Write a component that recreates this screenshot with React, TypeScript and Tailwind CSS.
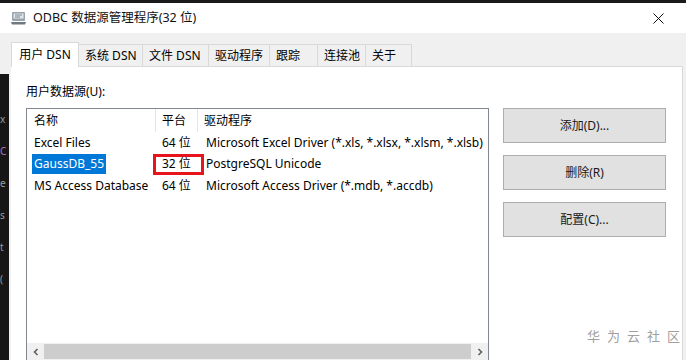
import React from 'react';

const font = { fontFamily: '"Noto Sans", "Noto Sans CJK SC", sans-serif' };

const tabs = [
    { label: '系统 DSN', w: 'w-[64px]' },
    { label: '文件 DSN', w: 'w-[66px]' },
    { label: '驱动程序', w: 'w-[61px]' },
    { label: '跟踪', w: 'w-[48px]' },
    { label: '连接池', w: 'w-[48px]' },
    { label: '关于', w: 'w-[46px]' },
];

const rows = [
    { name: 'Excel Files', bits: '64 位', driver: 'Microsoft Excel Driver (*.xls, *.xlsx, *.xlsm, *.xlsb)' },
    { name: 'GaussDB_55', bits: '32 位', driver: 'PostgreSQL Unicode', selected: true },
    { name: 'MS Access Database', bits: '64 位', driver: 'Microsoft Access Driver (*.mdb, *.accdb)' },
];

const OdbcIcon = () => (
    <svg width="16" height="14" viewBox="0 0 16 14">
        <rect x="1" y="1" width="13" height="9" rx="1" fill="#9aa3ab" />
        <rect x="2.5" y="2.5" width="10" height="5" fill="#dfe6ec" />
        <rect x="4" y="3.5" width="7" height="1" fill="#7b8690" />
        <rect x="4" y="5.5" width="5" height="1" fill="#7b8690" />
        <path d="M0 11 h15 l-1 2.5 h-13 z" fill="#6f7880" />
    </svg>
);

const WinButton = ({ children }: { children: React.ReactNode }) => (
    <div className="h-[35px] w-[163px] bg-[#e1e1e1] border border-[#adadad] flex items-center justify-center text-[12px] text-[#1a1a1a]">
        {children}
    </div>
);

const App = () => {
    return (
        <div className="w-[686px] h-[360px] overflow-hidden bg-[#f0f0f0] flex flex-col text-black" style={font}>
            {/* window top edge */}
            <div className="h-[3px] bg-[#1b1b1b]" />

            {/* title bar */}
            <div className="h-[30px] bg-white flex items-center pl-[11px] pr-[22px] shrink-0">
                <OdbcIcon />
                <span className="ml-[6px] text-[12.5px] text-[#111]">ODBC 数据源管理程序(32 位)</span>
                <div className="ml-auto">
                    <svg width="11" height="11" viewBox="0 0 11 11">
                        <path d="M0.5 0.5 L10.5 10.5 M10.5 0.5 L0.5 10.5" stroke="#111" strokeWidth="1" />
                    </svg>
                </div>
            </div>

            {/* tab strip */}
            <div className="h-[33px] flex items-end pl-[11px] shrink-0">
                <div className="w-[68px] h-[25px] bg-white border border-b-0 border-[#d9d9d9] flex items-center justify-center text-[12px] relative top-[1px]">
                    用户 DSN
                </div>
                {tabs.map((t) => (
                    <div
                        key={t.label}
                        className={`${t.w} h-[22px] border border-l-0 border-b-0 border-[#d9d9d9] bg-[#f0f0f0] flex items-center pl-[6px] text-[12px]`}
                    >
                        {t.label}
                    </div>
                ))}
            </div>

            {/* body row */}
            <div className="flex-1 flex min-h-0">
                <div className="w-[9px] flex flex-col">
                    <div className="h-[8px]" />
                    <div className="flex-1 bg-[#161616] flex flex-col gap-[22px] pt-[40px] text-[10px] text-[#9a9a9a] leading-none overflow-hidden">
                        <span>x</span>
                        <span className="text-[#b070c0]">C</span>
                        <span>e</span>
                        <span>s</span>
                        <span>t</span>
                        <span>(</span>
                    </div>
                </div>
                <div className="w-[2px]" />

                {/* tab page */}
                <div className="w-[672px] bg-white border-t border-r border-[#d9d9d9] flex pl-[15px] pt-[16px] min-h-0">
                    <div className="flex flex-col w-[463px]">
                        <div className="text-[12px] leading-[16px] h-[25px] pt-[1px]">用户数据源(U):</div>

                        <div className="flex-1 border border-[#828790] border-b-0 flex flex-col min-h-0">
                            {/* header */}
                            <div className="flex h-[23px] items-center text-[12px] shrink-0">
                                <div className="w-[129px] pl-[7px] h-full flex items-center border-r border-[#e5e5e5]">名称</div>
                                <div className="w-[42px] pl-[6px] h-full flex items-center border-r border-[#e5e5e5]">平台</div>
                                <div className="pl-[6px]">驱动程序</div>
                            </div>
                            {rows.map((r) => (
                                <div key={r.name} className="flex h-[21.5px] items-center text-[12px] whitespace-nowrap shrink-0">
                                    <div className="w-[129px] pl-[5px]">
                                        <span className={r.selected ? 'inline-block h-[20px] leading-[20px] bg-[#0078d7] text-white px-[2px]' : 'px-[2px]'}>{r.name}</span>
                                    </div>
                                    <div className="w-[48px] pl-[6px] h-full flex items-center relative">
                                        {r.bits}
                                        {r.selected && (
                                            <div className="absolute left-[-3px] top-[0px] w-[51px] h-[21px] border-[3px] border-[#e8141b]" />
                                        )}
                                    </div>
                                    <div className="pl-[2px]">{r.driver}</div>
                                </div>
                            ))}
                            <div className="flex-1" />

                            {/* horizontal scrollbar */}
                            <div className="h-[17px] flex bg-[#f0f0f0] shrink-0">
                                <div className="w-[17px] flex items-center justify-center">
                                    <svg width="8" height="8" viewBox="0 0 8 8">
                                        <path d="M5.5 1 L2.5 4 L5.5 7" stroke="#606060" strokeWidth="1.6" fill="none" />
                                    </svg>
                                </div>
                                <div className="flex-1 bg-[#cdcdcd] my-[1px]" />
                                <div className="w-[17px] flex items-center justify-center">
                                    <svg width="8" height="8" viewBox="0 0 8 8">
                                        <path d="M2.5 1 L5.5 4 L2.5 7" stroke="#606060" strokeWidth="1.6" fill="none" />
                                    </svg>
                                </div>
                            </div>
                        </div>
                    </div>

                    {/* buttons */}
                    <div className="flex flex-col ml-[14px] pt-[25px] gap-[12px]">
                        <WinButton>添加(D)...</WinButton>
                        <WinButton>删除(R)</WinButton>
                        <WinButton>配置(C)...</WinButton>
                        <div className="flex-1" />
                        <div className="text-[13px] text-[#a0a0a0] tracking-[7px] text-right pb-[14px] mr-[-21px] ml-[-80px]">
                            华为云社区
                        </div>
                    </div>
                </div>
            </div>
        </div>
    );
};

export default App;
